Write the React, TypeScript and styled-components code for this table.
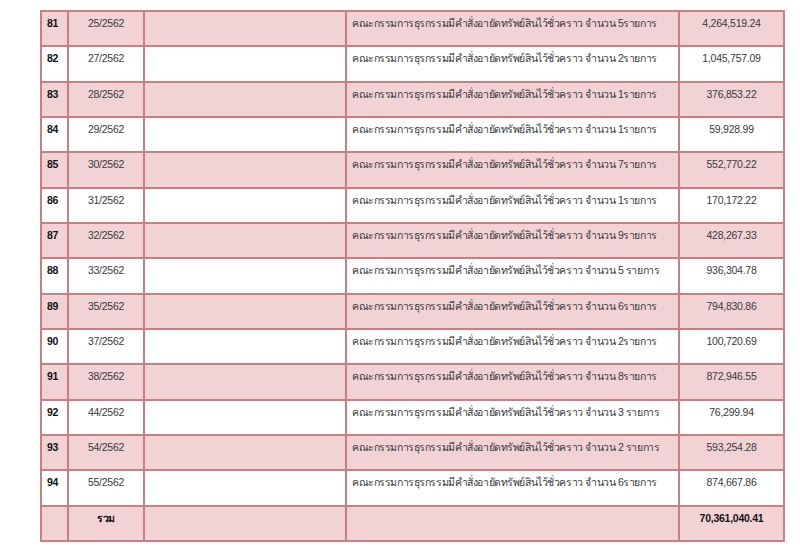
import styled, { createGlobalStyle } from 'styled-components';

interface RowProps {
  shaded: boolean;
}
interface CellProps {
  align?: 'left' | 'center';
  bold?: boolean;
}

const rows = [
  { no: 81, ref: '25/2562', count: '5รายการ', amount: '4,264,519.24' },
  { no: 82, ref: '27/2562', count: '2รายการ', amount: '1,045,757.09' },
  { no: 83, ref: '28/2562', count: '1รายการ', amount: '376,853.22' },
  { no: 84, ref: '29/2562', count: '1รายการ', amount: '59,928.99' },
  { no: 85, ref: '30/2562', count: '7รายการ', amount: '552,770.22' },
  { no: 86, ref: '31/2562', count: '1รายการ', amount: '170,172.22' },
  { no: 87, ref: '32/2562', count: '9รายการ', amount: '428,267.33' },
  { no: 88, ref: '33/2562', count: '5 รายการ', amount: '936,304.78' },
  { no: 89, ref: '35/2562', count: '6รายการ', amount: '794,830.86' },
  { no: 90, ref: '37/2562', count: '2รายการ', amount: '100,720.69' },
  { no: 91, ref: '38/2562', count: '8รายการ', amount: '872,946.55' },
  { no: 92, ref: '44/2562', count: '3 รายการ', amount: '76,299.94' },
  { no: 93, ref: '54/2562', count: '2 รายการ', amount: '593,254.28' },
  { no: 94, ref: '55/2562', count: '6รายการ', amount: '874,667.86' },
];

const App = () => {
  return (
    <>
      <GlobalStyle />
      <Page>
        <Table>
          <colgroup>
            <col style={{ width: 27 }} />
            <col style={{ width: 76 }} />
            <col style={{ width: 202 }} />
            <col style={{ width: 333 }} />
            <col style={{ width: 105 }} />
          </colgroup>
          <tbody>
            {rows.map((r, i) => (
              <Row key={r.no} shaded={i % 2 === 0}>
                <Cell bold>{r.no}</Cell>
                <Cell align="center">{r.ref}</Cell>
                <Cell />
                <DescCell>
                  คณะกรรมการธุรกรรมมีคำสั่งอายัดทรัพย์สินไว้ชั่วคราว จำนวน {r.count}
                </DescCell>
                <Cell align="center">{r.amount}</Cell>
              </Row>
            ))}
            <Row shaded>
              <Cell />
              <Cell align="center" bold>
                รวม
              </Cell>
              <Cell />
              <Cell />
              <Cell align="center" bold>
                70,361,040.41
              </Cell>
            </Row>
          </tbody>
        </Table>
      </Page>
    </>
  );
};

export default App;

const GlobalStyle = createGlobalStyle`
  html, body {
    margin: 0;
    padding: 0;
    background: #ffffff;
  }
`;

const Page = styled.div`
  width: 800px;
  height: 551px;
  padding: 10px 0 0 40px;
  box-sizing: border-box;
  overflow: hidden;
  font-family: 'Liberation Sans', 'DejaVu Sans', 'Noto Sans', sans-serif;
`;

const Table = styled.table`
  width: 743px;
  table-layout: fixed;
  border-collapse: collapse;
  border: 2px solid #cb7e81;
`;

const Row = styled.tr<RowProps>`
  height: 35.33px;
  background: ${({ shaded }) => (shaded ? '#f1d3d6' : '#ffffff')};
`;

const Cell = styled.td<CellProps>`
  border: 2px solid #cb7e81;
  padding: 5px 5px 0;
  vertical-align: top;
  text-align: ${({ align }) => align ?? 'left'};
  font-size: 10.5px;
  line-height: 13px;
  letter-spacing: -0.25px;
  color: ${({ bold }) => (bold ? '#111111' : '#3a3a3a')};
  font-weight: ${({ bold }) => (bold ? 700 : 400)};
  white-space: nowrap;
  overflow: hidden;
`;

const DescCell = styled(Cell)`
  padding-left: 5px;
  letter-spacing: -0.43px;
`;
